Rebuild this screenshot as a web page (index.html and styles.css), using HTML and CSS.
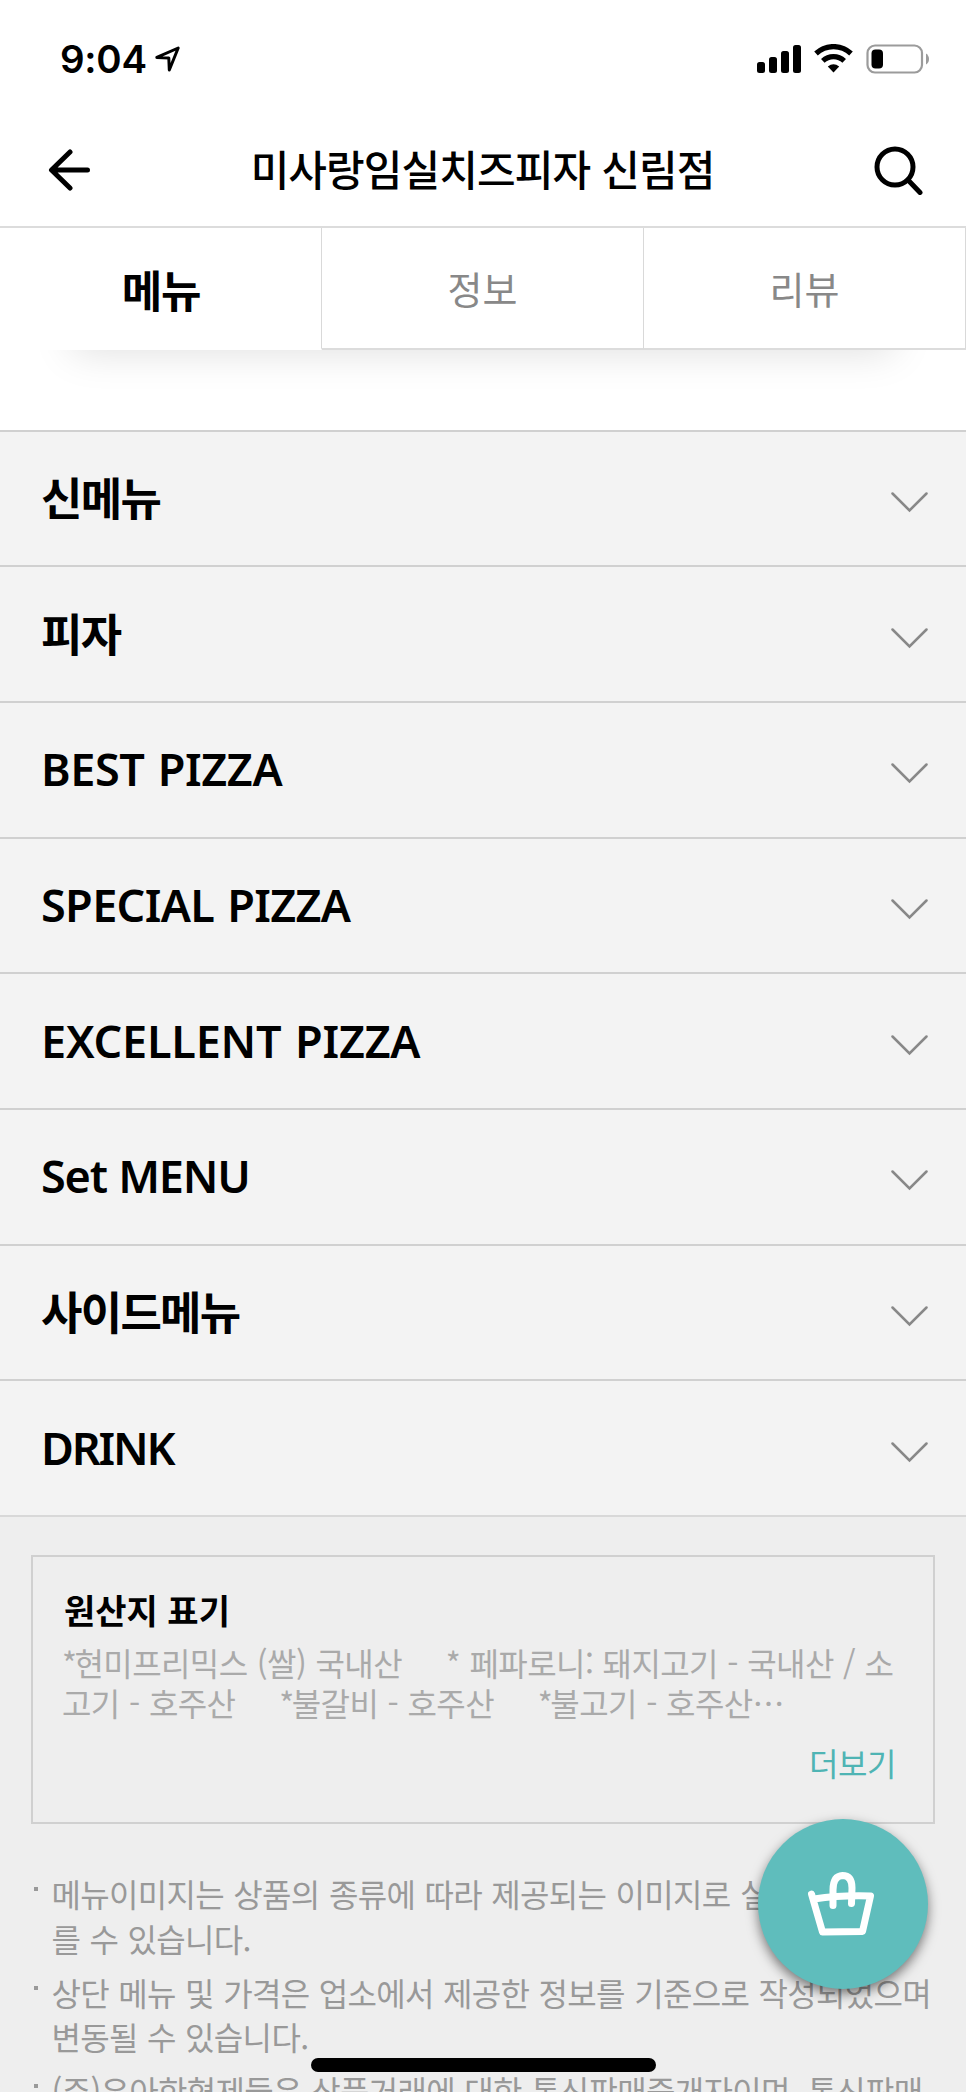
FILE: index.html
```html
<!DOCTYPE html>
<html lang="ko">
<head>
<meta charset="utf-8">
<title>미사랑임실치즈피자 신림점</title>
<link rel="stylesheet" href="styles.css">
</head>
<body>
<div class="screen">
  <div class="status">
    <div class="status-left">
      <span class="time">9:04</span>
      <svg class="locate" width="26" height="27" viewBox="0 0 26 27"><path d="M1.8 11.4 L23.2 2 L14.3 24 L13.8 11.9 Z" fill="none" stroke="#000" stroke-width="3" stroke-linejoin="round"/></svg>
    </div>
    <svg class="indicators" width="174" height="30" viewBox="0 0 174 30">
      <rect x="1" y="18" width="8" height="11" rx="2.5"/>
      <rect x="13" y="13" width="8" height="16" rx="2.5"/>
      <rect x="25" y="7" width="8" height="22" rx="2.5"/>
      <rect x="37" y="1" width="8" height="28" rx="2.5"/>
      <g fill="none" stroke="#000">
        <path d="M60 9.5 A25.5 25.5 0 0 1 95 9.5" stroke-width="5.2"/>
        <path d="M66.800 16.800 A15.600 15.600 0 0 1 88.200 16.800" stroke-width="5.200"/>
      </g>
      <path d="M71.800 22.500 Q77.500 18 83.200 22.500 L77.500 28.500 Z"/>
      <rect x="111.500" y="1.500" width="54.500" height="27" rx="7.500" fill="none" stroke="#9b9b9b" stroke-width="2.200"/>
      <rect x="115.500" y="5.500" width="11.500" height="19" rx="4"/>
      <path d="M170 9.500 Q173 11.500 173 15 Q173 18.500 170 20.500 Z" fill="#9b9b9b"/>
    </svg>
  </div>

  <header class="header">
    <svg class="back" width="43" height="43" viewBox="0 0 43 43"><path d="M22 3 L3.500 21 L22 39 M4 21 H39.500" fill="none" stroke="#000" stroke-width="5" stroke-linecap="round" stroke-linejoin="round"/></svg>
    <h1 class="title">미사랑임실치즈피자 신림점</h1>
    <svg class="search" width="50" height="50" viewBox="0 0 50 50"><circle cx="21" cy="22" r="18" fill="none" stroke="#000" stroke-width="5"/><path d="M34 35 L46 47.500" stroke="#000" stroke-width="5" stroke-linecap="round"/></svg>
  </header>

  <nav class="tabs">
    <div class="tab active">메뉴</div>
    <div class="tab">정보</div>
    <div class="tab">리뷰</div>
  </nav>

  <ul class="menu">
    <li class="row"><span class="name">신메뉴</span><svg class="chev" width="37" height="21" viewBox="0 0 37 21"><path d="M1.500 1.500 L18.500 18.500 L35.500 1.500"/></svg></li>
    <li class="row"><span class="name">피자</span><svg class="chev" width="37" height="21" viewBox="0 0 37 21"><path d="M1.500 1.500 L18.500 18.500 L35.500 1.500"/></svg></li>
    <li class="row"><span class="name latin best">BEST PIZZA</span><svg class="chev" width="37" height="21" viewBox="0 0 37 21"><path d="M1.500 1.500 L18.500 18.500 L35.500 1.500"/></svg></li>
    <li class="row"><span class="name latin special">SPECIAL PIZZA</span><svg class="chev" width="37" height="21" viewBox="0 0 37 21"><path d="M1.500 1.500 L18.500 18.500 L35.500 1.500"/></svg></li>
    <li class="row"><span class="name latin excellent">EXCELLENT PIZZA</span><svg class="chev" width="37" height="21" viewBox="0 0 37 21"><path d="M1.500 1.500 L18.500 18.500 L35.500 1.500"/></svg></li>
    <li class="row"><span class="name latin set">Set MENU</span><svg class="chev" width="37" height="21" viewBox="0 0 37 21"><path d="M1.500 1.500 L18.500 18.500 L35.500 1.500"/></svg></li>
    <li class="row"><span class="name">사이드메뉴</span><svg class="chev" width="37" height="21" viewBox="0 0 37 21"><path d="M1.500 1.500 L18.500 18.500 L35.500 1.500"/></svg></li>
    <li class="row"><span class="name latin drink">DRINK</span><svg class="chev" width="37" height="21" viewBox="0 0 37 21"><path d="M1.500 1.500 L18.500 18.500 L35.500 1.500"/></svg></li>
  </ul>

  <section class="info">
    <div class="origin">
      <h2 class="origin-title">원산지 표기</h2>
      <p class="origin-text"><span class="star">*</span>현미프리믹스 (쌀) 국내산<span class="gap">     </span>* 페파로니: 돼지고기 - 국내산 / 소
고기 - 호주산<span class="gap">     </span><span class="star">*</span>불갈비 - 호주산<span class="gap">     </span><span class="star">*</span>불고기 - 호주산⋯</p>
      <div class="more">더보기</div>
    </div>
    <ul class="notes">
      <li class="note">메뉴이미지는 상품의 종류에 따라 제공되는 이미지로 실제와 다
를 수 있습니다.</li>
      <li class="note">상단 메뉴 및 가격은 업소에서 제공한 정보를 기준으로 작성되었으며
변동될 수 있습니다.</li>
      <li class="note">(주)우아한형제들은 상품거래에 대한 통신판매중개자이며, 통신판매</li>
    </ul>
  </section>

  <div class="cart">
    <svg class="basket" width="68" height="66" viewBox="0 0 68 66" fill="none" stroke="#fff" stroke-width="7" stroke-linecap="round" stroke-linejoin="round"><path d="M4.500 23 L15.500 61 L55.500 60.500 L63.500 25 Q34 24 7 28"/><path d="M26 34.500 V19 Q26 5 35.500 4.500 Q45 4.500 45 17 L44.500 32.500"/></svg>
  </div>
  <div class="home-bar"></div>
</div>
</body>
</html>
```

FILE: styles.css
```css
* { box-sizing: border-box; margin: 0; padding: 0; }
body { background: #fff; }
.screen {
  position: relative;
  width: 966px;
  height: 2092px;
  overflow: hidden;
  background: #fff;
  color: #000;
  font-family: "Noto Sans CJK KR", sans-serif;
}
ul { list-style: none; }

.status {
  height: 118px;
  padding: 0 36px 0 60px;
  display: flex;
  align-items: center;
  justify-content: space-between;
}
.status-left { display: flex; align-items: center; gap: 8px; }
.time { font: 600 38.5px/46px Inter, sans-serif; letter-spacing: -0.3px; }

.header {
  height: 110px;
  padding: 0 42px 4px 48px;
  display: flex;
  align-items: center;
  justify-content: space-between;
  border-bottom: 2px solid #dcdcdc;
}
.title { margin-bottom: 5px; font-size: 42px; line-height: 60px; font-weight: 500; letter-spacing: -0.9px; }

.tabs {
  position: relative;
  z-index: 0;
  height: 122px;
  display: grid;
  grid-template-columns: repeat(3, 1fr);
}
.tabs::after {
  content: "";
  position: absolute;
  z-index: -1;
  left: 72px;
  right: 72px;
  bottom: 0;
  height: 60px;
  box-shadow: 0 2px 40px rgba(0, 0, 0, 0.13);
}
.tab {
  background: #fff;
  border-right: 1px solid #d9d9d9;
  border-bottom: 2px solid #dcdcdc;
  padding-bottom: 2px;
  display: flex;
  align-items: center;
  justify-content: center;
  font-size: 38px;
  color: #888;
}
.tab.active { padding: 1px 0 0 1px; border-bottom-color: #fff; color: #000; font-weight: 700; font-size: 44px; letter-spacing: -1.2px; }

.menu { margin-top: 79.5px; background: #f3f3f3; }
.row {
  height: 135.7px;
  padding: 0 38.5px 0 41px;
  border-top: 2px solid #d0d0d0;
  display: flex;
  align-items: center;
  justify-content: space-between;
}
.name { margin-bottom: 3px; font-size: 45px; line-height: 60px; font-weight: 700; letter-spacing: -1.7px; }
.name.latin { margin-bottom: 1px; font-family: "Noto Sans", sans-serif; font-weight: 600; font-size: 45px; letter-spacing: 0; }
.name.best { letter-spacing: -0.4px; word-spacing: 2px; }
.name.special { letter-spacing: -0.65px; word-spacing: 2px; }
.name.excellent { letter-spacing: -0.2px; word-spacing: 2px; }
.name.set { letter-spacing: -1.2px; word-spacing: 1px; }
.name.drink { letter-spacing: -2.2px; }
.chev { margin-top: 8px; fill: none; stroke: #888; stroke-width: 2.5; stroke-linecap: round; }

.info {
  height: 577px;
  border-top: 2px solid #d8d8d8;
  background: #eee;
  padding: 38px 31px 0;
}
.origin {
  height: 269px;
  border: 2.5px solid #d0d0d0;
  padding: 30px 37px 0 30px;
}
.origin-title { padding-left: 1px; font-size: 34px; line-height: 46px; font-weight: 700; letter-spacing: 0; }
.origin-text { margin: 10px 0 0 -1px; font-size: 32px; line-height: 39.5px; letter-spacing: -0.6px; word-spacing: 1px; color: #aaa; white-space: pre; }
.star { letter-spacing: -2.5px; }
.gap { word-spacing: 0.4px; }
.more { margin-top: 20px; text-align: right; font-size: 32px; line-height: 40px; letter-spacing: -0.4px; color: #4fb4b4; }

.notes { margin-top: 47px; display: grid; gap: 9.7px; }
.note {
  position: relative;
  padding-left: 20.5px;
  font-size: 32px;
  line-height: 44.5px;
  letter-spacing: -0.68px;
  word-spacing: 1px;
  color: #999;
  white-space: pre;
}
.note::before {
  content: "";
  position: absolute;
  left: 3px;
  top: 16px;
  width: 4px;
  height: 4px;
  background: #999;
}

.cart {
  position: absolute;
  left: 757.5px;
  top: 1819px;
  width: 170px;
  height: 170px;
  border-radius: 50%;
  background: #5fbdbc;
  box-shadow: 0 5px 12px rgba(0, 0, 0, 0.5);
  display: flex;
  align-items: center;
  justify-content: center;
}
.basket { margin-right: 3px; }
.home-bar {
  position: absolute;
  left: 311px;
  top: 2058px;
  width: 345px;
  height: 14px;
  border-radius: 7px;
  background: #000;
}
```
